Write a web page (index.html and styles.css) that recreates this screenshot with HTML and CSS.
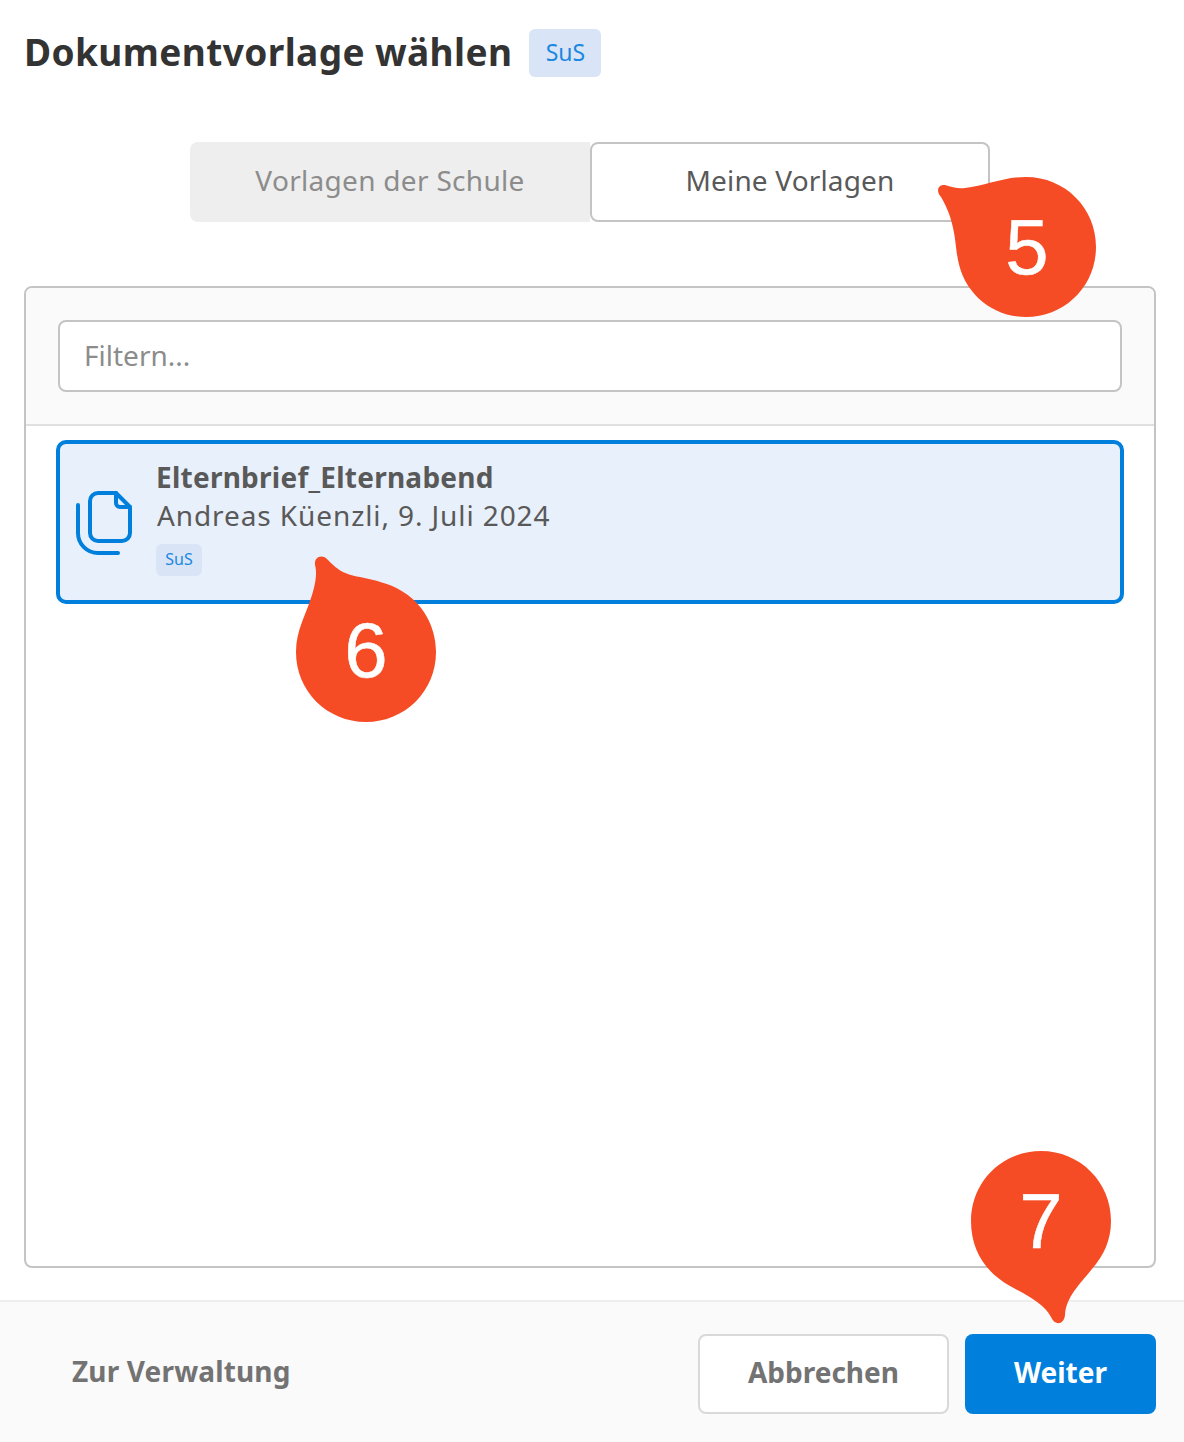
FILE: index.html
```html
<!DOCTYPE html>
<html lang="de">
  <head>
    <meta charset="UTF-8" />
    <meta name="viewport" content="width=device-width, initial-scale=1.0" />
    <title>Dokumentvorlage wählen</title>
    <link rel="stylesheet" href="styles.css">
  </head>
  <body>
    <div class="page">
      <div class="header">
        <h1 class="title">Dokumentvorlage wählen</h1>
        <span class="badge">SuS</span>
      </div>
      <div class="tabs">
        <div class="tab">Vorlagen der Schule</div>
        <div class="tab active">Meine Vorlagen</div>
      </div>
      <div class="panel">
        <div class="filter">
          <input type="text" class="filter-input" placeholder="Filtern..." />
        </div>
        <div class="list">
          <div class="item">
            <svg class="doc-icon" viewBox="70 484 70 74" fill="none" stroke="#0080dc" stroke-width="4" stroke-linecap="round" stroke-linejoin="round">
              <path d="M116 492H98a8 8 0 0 0-8 8V532a8 8 0 0 0 8 8H122a8 8 0 0 0 8-8V506Z" />
              <path d="M116 492V502a4 4 0 0 0 4 4H130" />
              <path d="M78 504V532a20 20 0 0 0 20 20H118" />
            </svg>
            <div class="item-text">
              <div class="item-name">Elternbrief_Elternabend</div>
              <div class="item-meta">Andreas Küenzli, 9. Juli 2024</div>
              <span class="badge small">SuS</span>
            </div>
          </div>
        </div>
      </div>
      <div class="footer">
        <a class="link">Zur Verwaltung</a>
        <div class="buttons">
          <button class="btn">Abbrechen</button>
          <button class="btn primary">Weiter</button>
        </div>
      </div>

      <div class="pin pin-5">
        <svg viewBox="930 175 170 145"><path d="M945 185C952 187 958 189 965 188C985 186 1003 177 1026 177C1065 177 1096 208 1096 247C1096 286 1065 317 1026 317C992 317 964 293 958 260C955 245 956 222 941 197C935 190 939 184 945 185Z" /></svg>
        <span class="num">5</span>
      </div>
      <div class="pin pin-6">
        <svg viewBox="290 550 150 175"><path d="M328 560C336 568 342 574 360 577C375 580 390 584 400 590C422 602 436 626 436 652C436 691 405 722 366 722C327 722 296 691 296 652C296 630 306 615 312 595C316 582 317 572 315 565C314 556 323 554 328 560Z" /></svg>
        <span class="num">6</span>
      </div>
      <div class="pin pin-7">
        <svg viewBox="965 1145 150 185"><path d="M1041 1151C1080 1151 1111 1182 1111 1221C1111 1240 1104 1255 1092 1269C1080 1284 1066 1297 1065 1315C1064 1325 1055 1326 1051 1317C1044 1304 1030 1297 1010 1286C985 1272 971 1250 971 1221C971 1182 1002 1151 1041 1151Z" /></svg>
        <span class="num">7</span>
      </div>
    </div>
  </body>
</html>
```

FILE: styles.css
```css
* {
  padding: 0;
  margin: 0;
  box-sizing: border-box;
}
html, body {
  width: 100%;
  height: 100%;
  overflow: hidden;
}
body {
  background: #fff;
  color: #595959;
  font-family: "Noto Sans", "Open Sans", sans-serif;
}
.page {
  position: relative;
  width: 1184px;
  height: 1442px;
  display: flex;
  flex-direction: column;
}
.header {
  display: flex;
  align-items: center;
  gap: 17px;
  height: 48px;
  margin: 29px 0 0 24px;
}
.title {
  font-size: 37px;
  font-weight: 700;
  letter-spacing: 0.4px;
  color: #333;
  padding-bottom: 4px;
}
.badge {
  display: inline-block;
  width: 72px;
  height: 48px;
  line-height: 46px;
  text-align: center;
  font-size: 23px;
  color: #1a88e0;
  background: #d9e4f7;
  border-radius: 6px;
}
.badge.small {
  width: 46px;
  height: 32px;
  line-height: 30px;
  font-size: 16px;
  border-radius: 6px;
}
.tabs {
  display: flex;
  width: 800px;
  height: 80px;
  margin: 65px 0 64px 190px;
}
.tab {
  flex: 0 0 400px;
  display: flex;
  align-items: center;
  justify-content: center;
  padding-bottom: 4px;
  font-size: 28px;
  letter-spacing: 0.3px;
  color: #8c8c8c;
  background: #eee;
  border-radius: 8px 0 0 8px;
}
.tab.active {
  letter-spacing: 0.15px;
  color: #595959;
  background: #fff;
  border: 2px solid #c4c4c4;
  border-radius: 8px;
}
.panel {
  display: flex;
  flex-direction: column;
  width: 1132px;
  height: 982px;
  margin-left: 24px;
  border: 2px solid #c4c4c4;
  border-radius: 8px;
  overflow: hidden;
}
.filter {
  padding: 32px;
  background: #fafafa;
  border-bottom: 2px solid #e0e0e0;
}
.filter-input {
  display: block;
  width: 100%;
  height: 72px;
  padding: 0 24px 2px;
  font: inherit;
  font-size: 28px;
  color: #595959;
  background: #fff;
  border: 2px solid #c4c4c4;
  border-radius: 8px;
  outline: none;
}
.filter-input::placeholder {
  color: #8c8c8c;
  opacity: 1;
}
.list {
  flex: 1;
  padding: 14px 30px;
}
.item {
  display: flex;
  align-items: center;
  height: 164px;
  padding-left: 10px;
  background: #e8f0fb;
  border: 4px solid #0080dc;
  border-radius: 10px;
}
.doc-icon {
  width: 70px;
  height: 74px;
  flex: none;
}
.item-text {
  margin-left: 16px;
  padding-bottom: 11px;
}
.item-name {
  font-size: 28px;
  font-weight: 700;
  line-height: 38px;
  letter-spacing: 0.25px;
}
.item-meta {
  font-size: 28px;
  line-height: 38px;
  letter-spacing: 0.9px;
  margin: 0 0 10px 1px;
}
.footer {
  display: flex;
  align-items: center;
  justify-content: space-between;
  height: 142px;
  margin-top: 32px;
  padding: 4px 28px 0 72px;
  background: #fafafa;
  border-top: 2px solid #eee;
}
.link {
  font-size: 28px;
  font-weight: 700;
  letter-spacing: 0.15px;
  color: #737373;
  margin-bottom: 6px;
}
.buttons {
  display: flex;
  gap: 16px;
}
.btn {
  width: 251px;
  height: 80px;
  padding-bottom: 4px;
  font: inherit;
  font-size: 28px;
  font-weight: 700;
  color: #737373;
  background: #fff;
  border: 2px solid #d9d9d9;
  border-radius: 8px;
}
.btn.primary {
  width: 191px;
  color: #fff;
  background: #0080dc;
  border: none;
}
.pin {
  position: absolute;
}
.pin svg {
  display: block;
  width: 100%;
  height: 100%;
  fill: #f64c25;
}
.num {
  position: absolute;
  width: 140px;
  height: 90px;
  line-height: 90px;
  text-align: center;
  font-family: "Liberation Sans", sans-serif;
  font-size: 78px;
  -webkit-text-stroke: 0.5px #fff;
  color: #fff;
}
.pin-5 {
  left: 930px;
  top: 175px;
  width: 170px;
  height: 145px;
}
.pin-5 .num {
  left: 27px;
  top: 27px;
}
.pin-6 {
  left: 290px;
  top: 550px;
  width: 150px;
  height: 175px;
}
.pin-6 .num {
  left: 6px;
  top: 55px;
}
.pin-7 {
  left: 965px;
  top: 1145px;
  width: 150px;
  height: 185px;
}
.pin-7 .num {
  left: 6px;
  top: 31px;
}
```
